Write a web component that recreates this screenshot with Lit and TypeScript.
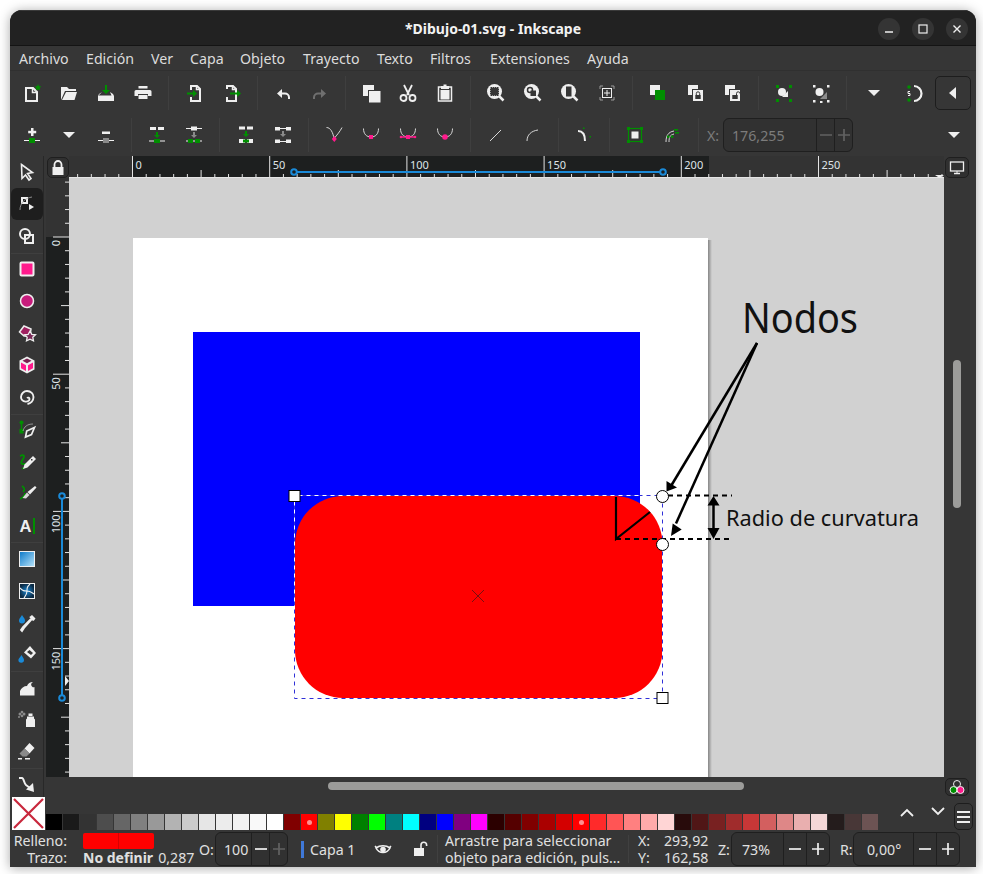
import { LitElement, html, css, svg } from "lit";
import { customElement } from "lit/decorators.js";

const W = "#efefef";
const G = "#008f00";
const P = "#ff1a8c";
const B = "#1a8ad8";

const line = (d: string, c = W, w = 2) => svg`<path d=${d} fill="none" stroke=${c} stroke-width=${w}/>`;
const fill = (d: string, c = W) => svg`<path d=${d} fill=${c}/>`;
const rect = (x: number, y: number, w: number, h: number, c = W) => svg`<rect x=${x} y=${y} width=${w} height=${h} fill=${c}/>`;
const dot = (x: number, y: number, r: number, c = W) => svg`<circle cx=${x} cy=${y} r=${r} fill=${c}/>`;

const magnifier = (inner: any) => svg`${dot(10.5, 10.5, 7.5)}${line("M15 15l4.5 4.5", W, 2.5)}${inner}`;

const top: any[] = [
  svg`${line("M6 7h7l4 4v9H6z")}${line("M12.5 7v4.5H17", W, 1.5)}${fill("M18 3l1 2.3 2.4.2-1.8 1.6.6 2.4-2.2-1.3-2.2 1.3.6-2.4-1.8-1.6 2.4-.2z", G)}`,
  svg`${fill("M4 6h6l2 2h7v2H8l-4 9z")}${fill("M9 11h11l-2.5 8H5z")}`,
  svg`${rect(11, 4, 2, 7, G)}${fill("M8 9h8l-4 4z", G)}${fill("M8 11l-3 2-1 2v5h16v-5l-1-2-3-2 1.5 3.5h-13z")}`,
  svg`${rect(7.5, 5, 9, 2.5)}${fill("M5 9h14a1.5 1.5 0 0 1 1.5 1.5V15H17v-2H7v2H3.500v-4.500A1.500 1.500 0 0 1 5 9z")}${rect(7.5, 14, 9, 4)}`,
  svg`${line("M9 9V5h6l3 3v12H9v-4")}${line("M14.500 5v3.500H18", W, 1.500)}${rect(5, 11.500, 8, 2, G)}${fill("M11 9l4 3.500-4 3.500z", G)}`,
  svg`${line("M7 8V5h6l3 3v12H7v-4")}${line("M12.500 5v3.500H16", W, 1.500)}${rect(10, 11.500, 8, 2, G)}${fill("M17 9l4 3.500-4 3.500z", G)}`,
  svg`${line("M8 12.500h6a4 4 0 0 1 4 4v1.500")}${fill("M11 8v9l-5-4.500z")}`,
  svg`${line("M16 12.500h-6a4 4 0 0 0-4 4v1.500", "#6f6f6f")}${fill("M13 8v9l5-4.500z", "#6f6f6f")}`,
  svg`${rect(4, 4, 11, 11)}${rect(9, 9, 12, 12, "#363636")}${rect(10, 10, 11.500, 11.500)}`,
  svg`${line("M8 4l5 10M16 4l-5 10", W, 1.800)}<circle cx="7.500" cy="17" r="3" fill="none" stroke=${W} stroke-width="1.800"/><circle cx="16.500" cy="17" r="3" fill="none" stroke=${W} stroke-width="1.800"/>`,
  svg`${line("M8 6H5.500v14h13V6H16", W, 1.500)}${fill("M8 8V5h2.500V3.500h3V5H16v3z")}${rect(7.500, 9, 9, 9.500)}`,
  magnifier(svg`<rect x="6" y="6" width="9" height="9" fill="#363636" stroke=${W} stroke-width="1" stroke-dasharray="1 1"/>`),
  magnifier(svg`<circle cx="9" cy="9" r="2.500" fill="none" stroke="#363636" stroke-width="1.500"/>${rect(9.500, 9.500, 5.500, 5.500, "#363636")}`),
  magnifier(svg`<rect x="7.500" y="5" width="6.500" height="11" fill="#363636" stroke=${W} stroke-width="1"/>`),
  svg`<path d="M5 8V5h3M16 5h3v3M19 16v3h-3M8 19H5v-3" fill="none" stroke="#9a9a9a" stroke-width="1"/><rect x="7.500" y="7.500" width="9" height="9" fill="none" stroke=${W} stroke-width="1"/>${line("M12 9v6M9 12h6", W, 1)}`,
  svg`${rect(4, 4, 10, 10)}${rect(9, 9, 10, 10, G)}`,
  svg`${rect(4, 4, 10, 10)}${rect(8, 8, 10, 11, "#363636")}${rect(9, 9, 10, 11)}${line("M12.300 14v-1.500a1.700 1.700 0 0 1 3.400 0V14", "#363636", 1)}${rect(11.300, 14, 5.400, 4, "#363636")}`,
  svg`${rect(4, 4, 10, 10)}${rect(8, 8, 10, 11, "#363636")}${rect(9, 9, 10, 11)}${line("M15.500 14v-1.500a1.700 1.700 0 0 1 3.400 0", "#363636", 1)}${rect(11.300, 14, 5.400, 4, "#363636")}`,
  svg`${rect(4, 4, 3, 3, G)}${rect(17, 4, 3, 3, G)}${rect(4, 18, 3, 3, G)}${rect(17, 18, 3, 3, G)}${dot(10, 11, 4)}${fill("M16 10v6h-6z")}`,
  svg`${rect(4, 4, 2.500, 2.500)}${rect(18, 4, 2.500, 2.500)}${rect(4, 19, 2.500, 2.500)}${rect(18, 19, 2.500, 2.500)}${rect(11, 20, 2.500, 2)}${dot(10.500, 11, 4)}${fill("M18 11v7h-7z", "#8a8a8a")}`,
  svg`${fill("M6 9h12l-6 6z")}`,
  svg`${line("M12 5a7.500 7.500 0 0 1 0 15", W, 2.200)}${dot(7, 6, 1.800, G)}${dot(7, 19, 1.800, G)}${line("M8 10.500H6v2h2v2H6", W, 1)}`,
];
const topSeps = new Set([3, 5, 7, 10, 14, 17, 19]);

const bowl = (x = 4.500) => line(`M${x} 5.500c0 5.500 3 8.500 7.500 8.500s7.500-3 7.500-8.500`, "#d8d8d8", 1);
const second: any[] = [
  svg`${rect(11, 5, 2.500, 8)}${rect(8.200, 7.800, 8, 2.500)}${rect(4, 17, 16, 1)}${rect(9, 15, 6, 5, G)}`,
  svg`${fill("M6 9h12l-6 6z")}`,
  svg`${rect(8, 8.500, 8, 2.500)}${rect(4, 17, 16, 1)}${rect(9, 15, 6, 5, "#8a8a8a")}`,
  svg`${rect(5, 4, 6, 3)}${rect(13, 4, 6, 3)}${rect(11, 9, 2, 5, G)}${fill("M9 12h6l-3 3z", G)}${rect(4, 17.500, 16, 1)}${rect(9, 16, 6, 4, G)}`,
  svg`${rect(9, 3.500, 6, 4)}${rect(4, 5, 16, 1)}${rect(11, 9, 2, 5, "#8a8a8a")}${fill("M9 12h6l-3 3z", "#8a8a8a")}${rect(4, 17.500, 16, 1)}${rect(6, 16, 5, 4, G)}${rect(13, 16, 5, 4, G)}`,
  svg`${rect(5, 3.500, 6, 3)}${rect(13, 3.500, 6, 3)}${rect(11, 8, 2, 5, G)}${fill("M9 11h6l-3 3z", G)}${rect(5, 16, 6, 4)}${rect(13, 16, 6, 4)}${rect(9, 16.500, 6, 3, G)}`,
  svg`${rect(4, 4, 5, 3.500)}${rect(15, 4, 5, 3.500)}${rect(9, 5, 6, 1)}${rect(11, 8, 2, 5, "#8a8a8a")}${fill("M9 11h6l-3 3z", "#8a8a8a")}${rect(4, 16.500, 5, 3.500)}${rect(15, 16.500, 5, 3.500)}${rect(9, 18, 6, 1)}`,
  svg`${line("M4.500 4.500c4 0 6.500 5 7.500 11M20 4.500c-2 4-5 7.500-8 11", "#d8d8d8", 1)}${fill("M12.300 13l2.500 3-2.500 3-2.500-3z", P)}`,
  svg`${bowl()}${rect(10, 12, 4, 4, P)}`,
  svg`${bowl()}${rect(10, 12, 4, 4, P)}${rect(5, 13.300, 5, 1.400, P)}${rect(14, 13.300, 5, 1.400, P)}${dot(5, 14, 1.300, P)}${dot(19, 14, 1.300, P)}`,
  svg`${bowl()}${dot(12, 14, 2.800, P)}`,
  svg`${line("M6 18L17 7", "#d8d8d8", 1)}`,
  svg`${line("M6 18c0-6 4-10 11-11", "#d8d8d8", 1)}`,
  svg`${line("M6 8c4 0 7 3 7 10", W, 2)}${rect(11, 4.500, 1.500, 1.500, G)}${rect(17.500, 13, 1.500, 1.500, G)}`,
  svg`<rect x="5.500" y="5.500" width="13" height="13" fill="none" stroke=${G} stroke-width="1.200"/>${rect(8.500, 8.500, 7, 7)}${rect(4, 4, 3, 3, G)}${rect(17, 4, 3, 3, G)}${rect(4, 17, 3, 3, G)}${rect(17, 17, 3, 3, G)}`,
  svg`${line("M6 19c0-6 2-10 8-11", "#d8d8d8", 1)}${line("M9 19c0-5 1-7 5-8", "#d8d8d8", 1)}${rect(14, 6, 4, 1.600, G)}${rect(15, 9, 4, 1.600, G)}${rect(7, 12.500, 2.400, 2.400, G)}${rect(11, 12.500, 2.400, 2.400, G)}`,
];
const secondSeps = new Set([2, 4, 6, 10, 12, 13, 15]);

const tools: { i: any; sep?: boolean; on?: boolean }[] = [
  { i: svg`<path d="M6.500 4.500l11 8-5 1 3.500 5-2 1.500-3.500-5-3.500 3.500z" fill="#363636" stroke=${W} stroke-width="1.600"/>` },
  { on: true, i: svg`<rect x="7" y="6" width="5" height="5" fill="none" stroke=${W} stroke-width="2"/>${line("M5 18c0-7 5-12 12-13", "#aaaaaa", 0.800)}${fill("M14 12l5 3-5 3z")}` },
  { i: svg`<circle cx="10" cy="10" r="5" fill="none" stroke=${W} stroke-width="2"/><rect x="10" y="11" width="8" height="8" fill="none" stroke=${W} stroke-width="2"/>` },
  { sep: true, i: svg`<rect x="5.500" y="5.500" width="13" height="13" rx="1" fill=${P} stroke=${W} stroke-width="2"/>` },
  { i: svg`<circle cx="12" cy="12" r="6.500" fill="#c71c7c" stroke=${W} stroke-width="1.500"/>` },
  { i: svg`<path d="M9 5l7 3-1 7H9L4.500 11z" fill="#a02060" stroke=${W} stroke-width="1.500"/><path d="M15 10l1.800 3.300 3.700.5-2.700 2.500.7 3.500-3.500-1.700-3.500 1.700.7-3.500-2.700-2.500 3.700-.5z" fill="#7a2a58" stroke=${W} stroke-width="1.300"/>` },
  { i: svg`${fill("M12 3.500l7.500 4v9l-7.500 4-7.500-4v-9z")}${fill("M12 5.500l4.500 2.300-4.500 2.400-4.500-2.400z", "#7a2050")}${fill("M6 9.500l5 2.700v5.800l-5-2.700z", P)}${fill("M18 9.500l-5 2.700v5.800l5-2.700z", P)}` },
  { i: svg`${line("M12 13a1.500 1.500 0 0 1 2.500 1c0 1.800-2 2.800-4 2.600-2.700-.2-4.500-2.400-4.500-4.600 0-3.500 3-6 6-6 4 0 6.500 3 6.500 6 0 4-3 6.500-6 7", W, 1.900)}` },
  { sep: true, i: svg`${rect(4.500, 11, 4, 4.500, G)}${dot(6.500, 4.500, 2, G)}${line("M6.500 6v5", G, 1.500)}${line("M8 13c1-4 4-7 10-7", "#aaaaaa", 0.800)}<path d="M19.500 9.500l-3 7-6 2.500 1.200-6z" fill="#363636" stroke=${W} stroke-width="1.700"/>` },
  { i: svg`${line("M5 6c4-2 5 0 3 3s-3 5 1 5 2 3-2 5", G, 1.800)}${fill("M18 6l3 3-8.500 8.500-4.500 1.500 1.500-4.500z")}${rect(16, 9, 1.500, 1.500, "#363636")}` },
  { i: svg`${line("M7 4c3 2 3 4 1 6", G, 1.700)}${line("M10 11c0 3-3 5-5 6", G, 1.700)}${fill("M20 4l1.500 1.500-6.500 7-2.500-2.500z")}${fill("M12 10.500l2.500 2.500-3.500 3.500-3.500-.5z", "#d8d8d8")}` },
  { i: svg`<text x="4.500" y="18" font-family="Liberation Sans, sans-serif" font-weight="700" font-size="16.500" fill=${W}>A</text>${rect(18, 4, 2, 16, G)}` },
  { sep: true, i: svg`<defs><linearGradient id="gr" x1="0" y1="0" x2="1" y2="1"><stop offset="0" stop-color="#0a78c8"/><stop offset="1" stop-color="#b8e4fa"/></linearGradient></defs><rect x="4.500" y="4.500" width="15" height="15" fill="url(#gr)" stroke=${W} stroke-width="1"/>` },
  { i: svg`<defs><radialGradient id="ms"><stop offset="0" stop-color="#1a8ad8"/><stop offset="1" stop-color="#0b2a44"/></radialGradient></defs><rect x="4.500" y="4.500" width="15" height="15" fill="url(#ms)" stroke=${W} stroke-width="1"/>${line("M5 9c3 3 4 3 7 3s4 1 7 3M15 5c-3 3-3 4-3 7s-1 4-3 7", W, 1.100)}` },
  { i: svg`${fill("M7 4c2 3 3 4 3 5.500a3 3 0 0 1-6 0C4 8 5 7 7 4z", B)}<path d="M17 8l-8 9-2 3-1-1 2-3 8-8" fill="none" stroke=${W} stroke-width="1.800"/>${fill("M15 5.500l2-1.500 3.500 3.500-1.500 2-1 .5-3.500-3.500z")}` },
  { i: svg`${fill("M15 3l6 7-5 5.500-7-6z")}${fill("M14.500 7l3.500 3-2 2-4-3z", "#363636")}${fill("M6.500 12c1.500 2.500 2.500 3.500 2.500 5a2.800 2.800 0 0 1-5.600 0c0-1.500 1.500-2.500 3.100-5z", B)}` },
  { sep: true, i: svg`${fill("M5 19.500V15c1-3 4-5 7-5 1-2.500 3-4 6-4-2 1-2.500 3-1 4.500 1 1 2 1 2.500.5v8.500z")}` },
  { i: svg`${fill("M12 9.500h7v2l1 1V20H11v-7.500l1-1z")}${rect(13.500, 6.500, 4, 2.500)}${dot(5, 7, 1.500, "#8a8a8a")}${dot(9, 7, 1.500, "#8a8a8a")}${dot(7, 5, 1.300, "#8a8a8a")}${dot(7, 9, 1.300, "#8a8a8a")}${dot(4, 10, 1, "#8a8a8a")}` },
  { i: svg`${fill("M14.500 4l5 5-5 5.500-5-5z")}${fill("M9.500 9.500l5 5-3 3h-4l-3-3z", "#8a8a8a")}${rect(3, 19, 4, 1.500)}${rect(10, 19, 5, 1.500)}` },
  { sep: true, i: svg`${line("M4 6h3c2 0 2 6 4 7l4 3", W, 2)}${fill("M18 11l1 9-8-2.500z")}` },
];

const sw = [
  "#000000", "#1a1a1a", "#333333", "#4d4d4d", "#666666", "#808080", "#999999", "#b3b3b3", "#cccccc", "#e6e6e6", "#ececec", "#f2f2f2", "#f9f9f9", "#ffffff",
  "#800000", "#ff0000", "#808000", "#ffff00", "#008000", "#00ff00", "#008080", "#00ffff", "#000080", "#0000ff", "#800080", "#ff00ff",
  "#2b0000", "#550000", "#800000", "#aa0000", "#d40000", "#ff0000", "#ff2a2a", "#ff5555", "#ff8080", "#ffaaaa", "#ffd5d5",
  "#280b0b", "#501616", "#782121", "#a02c2c", "#c83737", "#d35f5f", "#de8787", "#e9afaf", "#f4d7d7", "#241c1c", "#483737", "#6c5353",
];

const menu = ["Archivo", "Edición", "Ver", "Capa", "Objeto", "Trayecto", "Texto", "Filtros", "Extensiones", "Ayuda"];

const TX = (u: number) => 63.5 + u * 2.744;
const VY = (u: number) => 59 + u * 2.744;

const minus = html`<svg width="12" height="12" viewBox="0 0 12 12"><path d="M0 6h12" stroke="currentColor" stroke-width="1.700"></path></svg>`;
const plus = html`<svg width="12" height="12" viewBox="0 0 12 12"><path d="M0 6h12M6 0v12" stroke="currentColor" stroke-width="1.700"></path></svg>`;

@customElement("app-root")
export class AppRoot extends LitElement {
  static styles = css`
    :host { display: block; width: 983px; height: 874px; background: #fff; font-family: "Noto Sans", sans-serif; overflow: hidden; }
    .window { position: absolute; left: 10px; top: 10px; width: 966px; height: 857px; display: flex; flex-direction: column; background: #363636; border-radius: 12px 12px 0 0; box-shadow: 0 1px 12px rgba(0,0,0,.35); overflow: hidden; color: #e0e0e0; font-size: 14.200px; }
    .title { height: 36px; flex: none; background: #222222; border-bottom: 1px solid #141414; border-top: 1px solid #3a3a3a; box-sizing: border-box; display: flex; align-items: center; justify-content: center; position: relative; font-weight: 700; font-size: 14px; color: #f2f2f2; }
    .wbtns { position: absolute; right: 8px; top: 7px; display: flex; gap: 12px; }
    .wbtn { width: 22px; height: 22px; border-radius: 50%; background: #343434; display: block; }
    .menu { height: 25px; flex: none; display: grid; grid-template-columns: 67px 65px 39px 50px 63px 74px 53px 60px 97px auto; align-items: center; padding-left: 9px; border-bottom: 1px solid #303030; box-sizing: border-box; color: #dcdcdc; }
    .bar { flex: none; display: flex; align-items: center; padding-left: 3.500px; position: relative; }
    .tb1 { height: 44px; }
    .tb2 { height: 41px; padding-bottom: 1px; box-sizing: border-box; }
    .btn { width: 37.100px; height: 24px; display: flex; justify-content: center; flex: none; }
    .btn.wide { width: 42px; }
    .ic { width: 24px; height: 24px; display: block; flex: none; }
    .sep { width: 14px; height: 34px; flex: none; display: flex; justify-content: center; }
    .sep::before { content: ""; width: 1px; background: #3f3f3f; }
    .collapse { position: absolute; left: 925px; top: 5px; width: 36px; height: 34px; box-sizing: border-box; border: 1px solid #1d1d1d; border-radius: 5px; display: flex; align-items: center; justify-content: center; background: #363636; }
    .dd2 { position: absolute; left: 932px; top: 8px; }
    .x { color: #7c7c7c; margin-left: 2px; width: 16px; flex: none; }
    .spin { flex: none; height: 34px; box-sizing: border-box; border: 1px solid #1f1f1f; border-radius: 6px; display: flex; align-items: center; background: #313131; }
    .spin .v { flex: 1; padding-left: 8px; white-space: nowrap; }
    .spin .c { width: 17px; height: 100%; border-left: 1px solid #1f1f1f; display: flex; align-items: center; justify-content: center; flex: none; color: #f0f0f0; }
    .spin.dim { color: #7c7c7c; }
    .spin.dim .c { color: #626262; }
    .os .c.off { color: #626262; }
    .xi { width: 130px; }
    .main { flex: none; height: 641px; display: flex; }
    .toolbox { width: 34px; height: 641px; box-sizing: border-box; padding-left: 1px; border-right: 1px solid #282828; flex: none; overflow: hidden; margin-right: 2px; }
    .tool { height: 32.200px; width: 32px; box-sizing: border-box; display: flex; align-items: center; justify-content: center; border-radius: 6px; }
    .tool.on { background: #1e1e1e; }
    .tool.sep2 { border-top: 1px solid #3f3f3f; border-radius: 0; }
    .grid { flex: 1; display: grid; grid-template-columns: 23px 875px 32px; grid-template-rows: 22px 599px 20px; }
    .lock { box-sizing: border-box; border: 1px solid #1f1f1f; border-radius: 5px; display: flex; align-items: center; justify-content: center; background: #303030; margin: 1px 0 0 1px; }
    .ruler { display: block; background: #333; }
    .canvas { display: block; background: #d1d1d1; }
    .vscroll { padding: 182px 0 0 9px; box-sizing: border-box; }
    .thumbv { width: 8px; height: 148px; border-radius: 4px; background: #9c9c9a; }
    .deskwrap { padding: 1px 0 0 1px; }
    .smallbtn { box-sizing: border-box; width: 24px; height: 21px; border: 1px solid #1f1f1f; border-radius: 5px; display: flex; align-items: center; justify-content: center; background: #303030; }
    .hscroll { grid-column: 1 / 3; padding: 5px 0 0 282px; }
    .thumbh { width: 416px; height: 8px; border-radius: 4px; background: #9c9c9a; }
    .cm { padding: 1px 0 0 1px; }
    .cm .smallbtn { height: 18px; }
    .palette { flex: none; height: 33px; display: flex; position: relative; padding-left: 2px; }
    .nofill { width: 33px; height: 33px; flex: none; display: block; background: #fff; }
    .swatches { display: flex; gap: 1px; align-items: flex-end; padding-left: 1px; height: 33px; }
    .s { width: 16px; height: 16px; flex: none; display: flex; align-items: center; justify-content: center; }
    .s.d::before { content: ""; width: 5px; height: 5px; border-radius: 50%; background: #ff8f8f; }
    .chev { position: absolute; }
    .chev.up { left: 885px; top: 4px; }
    .chev.down { left: 916px; top: 2px; }
    .pmenu { position: absolute; left: 944px; top: 6px; width: 19px; height: 27px; box-sizing: border-box; border: 1px solid #1d1d1d; border-radius: 5px; display: flex; flex-direction: column; justify-content: center; gap: 3px; padding: 0 2px; }
    .pmenu i { display: block; height: 2px; background: #efefef; }
    .status { flex: 1; display: flex; align-items: center; position: relative; white-space: nowrap; padding-top: 1px; }
    .fs { width: 189px; display: grid; grid-template-columns: 57px auto; grid-template-rows: 17px 17px; column-gap: 16px; flex: none; align-items: center; line-height: 17px; }
    .fs .l { text-align: right; }
    .fillsw { width: 71px; height: 16px; background: linear-gradient(90deg, #f00 0 34.500px, #d80000 34.500px 35.500px, #f00 35.500px); border-radius: 2px; }
    .strokev { white-space: nowrap; }
    .strokev b { font-weight: 700; font-size: 14px; }
    .strokev span { margin-left: 5px; }
    .o { width: 16px; flex: none; }
    .os { width: 73px; }
    .layerbar { width: 3px; height: 17px; background: #3f78d8; margin-left: 13px; flex: none; }
    .layer { width: 61px; padding-left: 6px; flex: none; }
    .eye { flex: none; }
    .lockic { margin-left: 13px; flex: none; }
    .vs { width: 1px; height: 28px; background: #404040; margin-left: 5px; flex: none; }
    .msg { width: 183px; padding-left: 7px; line-height: 17px; overflow: hidden; flex: none; box-sizing: border-box; width: 190px; }
    .msg + .vs { margin-left: 0; }
    .coords { width: 70px; display: grid; grid-template-columns: 26px 44px; grid-template-rows: 17px 17px; padding-left: 9px; flex: none; align-items: center; line-height: 17px; }
    .coords .n { text-align: right; }
    .z { margin-left: 10px; width: 13px; flex: none; }
    .zs { width: 99px; }
    .r { margin-left: 10px; width: 13px; flex: none; }
    .rs { width: 107px; }
    .zs .c, .rs .c { width: 22px; }
    .zs .v { padding-left: 10px; }
    .rs .v { padding-left: 13px; }
    .os .v { padding-left: 8px; }
  `;

  private topRuler() {
    const ticks = [];
    for (let u = -20; u <= 295; u += 5) {
      const x = TX(u);
      const h = u % 50 === 0 ? 22 : u % 25 === 0 ? 8 : 4;
      ticks.push(svg`<line x1=${x} x2=${x} y1=${22 - h} y2="22" stroke="#e4e4e4" stroke-width="1"/>`);
    }
    return html`<svg class="ruler" width="875" height="22" viewBox="0 0 875 22">
      <rect x="63" y="0" width="577" height="22" fill="#1d1f1f"></rect>
      <line x1="0" x2="875" y1="21.500" y2="21.500" stroke="#e4e4e4"></line>
      ${ticks}
      ${[0, 50, 100, 150, 200, 250].map((u) => svg`<text x=${TX(u) + 3} y="13" font-family="Noto Sans, sans-serif" font-size="11" fill="#dfe4e8">${u}</text>`)}
      <line x1="225" x2="594" y1="16" y2="16" stroke=${B} stroke-width="2"></line>
      <circle cx="225" cy="16" r="2.800" fill="#1d1f1f" stroke=${B} stroke-width="2"></circle>
      <circle cx="594" cy="16" r="2.800" fill="#1d1f1f" stroke=${B} stroke-width="2"></circle>
      <path d="M866 19h9l-4.500 3z" fill="#efefef"></path>
    </svg>`;
  }

  private leftRuler() {
    const ticks = [];
    for (let u = -20; u <= 200; u += 5) {
      const y = VY(u);
      const h = u % 50 === 0 ? 16 : u % 25 === 0 ? 8 : 4;
      ticks.push(svg`<line x1=${23 - h} x2="23" y1=${y} y2=${y} stroke="#e4e4e4" stroke-width="1"/>`);
    }
    return html`<svg class="ruler" width="23" height="599" viewBox="0 0 23 599">
      <rect x="0" y="59" width="23" height="540" fill="#1d1f1f"></rect>
      ${ticks}
      ${[0, 50, 100, 150].map((u) => svg`<text transform="translate(14 ${VY(u) + 3}) rotate(-90)" text-anchor="end" font-family="Noto Sans, sans-serif" font-size="11" fill="#dfe4e8">${u}</text>`)}
      <line x1="16" x2="16" y1="318" y2="520" stroke=${B} stroke-width="2"></line>
      <circle cx="16" cy="318" r="2.800" fill="#1d1f1f" stroke=${B} stroke-width="2"></circle>
      <circle cx="16" cy="520" r="2.800" fill="#1d1f1f" stroke=${B} stroke-width="2"></circle>
      <path d="M19 498l4 5-4 5z" fill="#efefef"></path>
    </svg>`;
  }

  private canvas() {
    return html`<svg class="canvas" width="875" height="599" viewBox="69 178 875 599">
      <defs>
        <linearGradient id="sh" x1="0" x2="1" y1="0" y2="0"><stop offset="0" stop-color="#000" stop-opacity=".36"></stop><stop offset="1" stop-color="#000" stop-opacity="0"></stop></linearGradient>
      </defs>
      <rect x="708" y="240" width="4" height="537" fill="url(#sh)"></rect>
      <rect x="133" y="238" width="575" height="539" fill="#fff"></rect>
      <rect x="193" y="332" width="447" height="274" fill="#0000ff"></rect>
      <rect x="295" y="496" width="367.500" height="202" rx="48" ry="48" fill="#ff0000"></rect>
      <rect x="294.500" y="495.500" width="368" height="203" fill="none" stroke="#fff" stroke-width="1"></rect>
      <rect x="294.500" y="495.500" width="368" height="203" fill="none" stroke="#3030d8" stroke-width="1" stroke-dasharray="4 4"></rect>
      <path d="M472 590l12 12M484 590l-12 12" stroke="#7a1010" stroke-width="1" fill="none"></path>
      <path d="M616 497v42L650 512" stroke="#000" stroke-width="2.200" fill="none"></path>
      <path d="M616 539H732M668 495.500H732" stroke="#000" stroke-width="2" stroke-dasharray="5 4" fill="none"></path>
      <path d="M757 343L671 486" stroke="#000" stroke-width="2.500" fill="none"></path>
      <path d="M757 343L676 523.500" stroke="#000" stroke-width="2.500" fill="none"></path>
      <path d="M666.500 491.500l0-10.500 10.500 6.500z" fill="#000"></path>
      <path d="M671 536l1.700-12.500 9 6z" fill="#000"></path>
      <path d="M713.500 503v27" stroke="#000" stroke-width="2.500" fill="none"></path>
      <path d="M713.500 496l6 9.500h-12zM713.500 539l6-11h-12z" fill="#000"></path>
      <rect x="289" y="490.500" width="11" height="11" fill="#fff" stroke="#000" stroke-width="1"></rect>
      <rect x="657" y="692.500" width="11" height="11" fill="#fff" stroke="#000" stroke-width="1"></rect>
      <circle cx="662.500" cy="496.500" r="6" fill="#fff" stroke="#000" stroke-width="1"></circle>
      <circle cx="662.500" cy="544.500" r="6" fill="#fff" stroke="#000" stroke-width="1"></circle>
      <text x="742" y="333" font-family="Noto Sans, sans-serif" font-size="41" textLength="116" lengthAdjust="spacingAndGlyphs" fill="#111">Nodos</text>
      <text x="726" y="526" font-family="Noto Sans, sans-serif" font-size="22.500" textLength="193" lengthAdjust="spacingAndGlyphs" fill="#111">Radio de curvatura</text>
    </svg>`;
  }

  private spin(cls: string, v: string, plusOff = false) {
    return html`<div class="spin ${cls}"><span class="v">${v}</span><span class="c">${minus}</span><span class="c ${plusOff ? "off" : ""}">${plus}</span></div>`;
  }

  render() {
    return html`<div class="window">
      <div class="title">
        <span>*Dibujo-01.svg - Inkscape</span>
        <div class="wbtns">
          <svg class="wbtn" viewBox="0 0 22 22"><path d="M7 14h8" stroke="#efefef" stroke-width="1.500"></path></svg>
          <svg class="wbtn" viewBox="0 0 22 22"><rect x="7" y="7" width="8" height="8" fill="none" stroke="#efefef" stroke-width="1.200"></rect></svg>
          <svg class="wbtn" viewBox="0 0 22 22"><path d="M7.500 7.500l7 7M14.500 7.500l-7 7" stroke="#efefef" stroke-width="1.400"></path></svg>
        </div>
      </div>
      <div class="menu">${menu.map((m) => html`<span>${m}</span>`)}</div>
      <div class="bar tb1">
        ${top.map((i, n) => html`<div class="btn ${n === 20 ? "wide" : ""}"><svg class="ic" viewBox="0 0 24 24">${i}</svg></div>${topSeps.has(n) ? html`<div class="sep"></div>` : ""}`)}
        <div class="collapse"><svg width="12" height="14" viewBox="0 0 12 14"><path d="M9 1v12L2 7z" fill="#efefef"></path></svg></div>
      </div>
      <div class="bar tb2">
        ${second.map((i, n) => html`<div class="btn"><svg class="ic" viewBox="0 0 24 24">${i}</svg></div>${secondSeps.has(n) ? html`<div class="sep"></div>` : ""}`)}
        <span class="x">X:</span>
        ${this.spin("dim xi", "176,255")}
        <div class="dd2"><svg class="ic" viewBox="0 0 24 24">${fill("M6 9h12l-6 6z")}</svg></div>
      </div>
      <div class="main">
        <div class="toolbox">
          ${tools.map((t) => html`<div class="tool ${t.on ? "on" : ""} ${t.sep ? "sep2" : ""}"><svg class="ic" viewBox="0 0 24 24">${t.i}</svg></div>`)}
        </div>
        <div class="grid">
          <div class="lock"><svg width="14" height="16" viewBox="0 0 14 16"><path d="M3.500 7V4.500a3.500 3.500 0 0 1 7 0V7" fill="none" stroke="#efefef" stroke-width="1.800"></path><rect x="1.500" y="7" width="11" height="8" fill="#efefef"></rect></svg></div>
          ${this.topRuler()}
          <div class="deskwrap"><div class="smallbtn"><svg width="16" height="14" viewBox="0 0 16 14"><rect x="1.500" y="1" width="13" height="9" fill="none" stroke="#efefef" stroke-width="1.300"></rect><path d="M5 12.500h6" stroke="#efefef" stroke-width="1.500"></path><path d="M8 10v2" stroke="#efefef"></path></svg></div></div>
          ${this.leftRuler()}
          ${this.canvas()}
          <div class="vscroll"><div class="thumbv"></div></div>
          <div class="hscroll"><div class="thumbh"></div></div>
          <div class="cm"><div class="smallbtn"><svg width="18" height="16" viewBox="0 0 18 16"><circle cx="9" cy="5" r="3.500" fill="none" stroke="#efefef"></circle><circle cx="5.500" cy="11" r="3.500" fill=${G} stroke="#efefef"></circle><circle cx="12.500" cy="11" r="3.500" fill=${P} stroke="#efefef"></circle></svg></div></div>
        </div>
      </div>
      <div class="palette">
        <svg class="nofill" viewBox="0 0 33 33"><path d="M2 2L31 31M31 2L2 31" stroke="#c8273c" stroke-width="2.200"></path></svg>
        <div class="swatches">${sw.map((c, i) => html`<span class="s ${i === 15 || i === 31 ? "d" : ""}" style="background:${c}"></span>`)}</div>
        <svg class="chev up ic" viewBox="0 0 24 24"><path d="M6 15l6-6 6 6" fill="none" stroke="#efefef" stroke-width="1.800"></path></svg>
        <svg class="chev down ic" viewBox="0 0 24 24"><path d="M6 9l6 6 6-6" fill="none" stroke="#efefef" stroke-width="1.800"></path></svg>
        <div class="pmenu"><i></i><i></i><i></i></div>
      </div>
      <div class="status">
        <div class="fs">
          <span class="l">Relleno:</span><div class="fillsw"></div>
          <span class="l">Trazo:</span><span class="strokev"><b>No definir</b><span>0,287</span></span>
        </div>
        <span class="o">O:</span>
        ${this.spin("os", "100", true)}
        <div class="layerbar"></div><span class="layer">Capa 1</span>
        <svg class="eye ic" viewBox="0 0 24 24"><path d="M4 9l2 2M20 9l-2 2M5 11c4-3 10-3 14 0-3 6-11 6-14 0z" fill="none" stroke="#efefef" stroke-width="1.600"></path><circle cx="12" cy="12.500" r="2.800" fill="#efefef"></circle></svg>
        <svg class="lockic ic" viewBox="0 0 24 24"><rect x="6" y="11" width="10" height="8" fill="#efefef"></rect><path d="M13 11V8a2.800 2.800 0 0 1 5.600 0v1" fill="none" stroke="#efefef" stroke-width="1.600"></path></svg>
        <div class="vs"></div>
        <div class="msg">Arrastre para seleccionar<br />objeto para edición, puls…</div>
        <div class="vs"></div>
        <div class="coords"><span>X:</span><span class="n">293,92</span><span>Y:</span><span class="n">162,58</span></div>
        <span class="z">Z:</span>
        ${this.spin("zs", "73%")}
        <span class="r">R:</span>
        ${this.spin("rs", "0,00°")}
      </div>
    </div>`;
  }
}
